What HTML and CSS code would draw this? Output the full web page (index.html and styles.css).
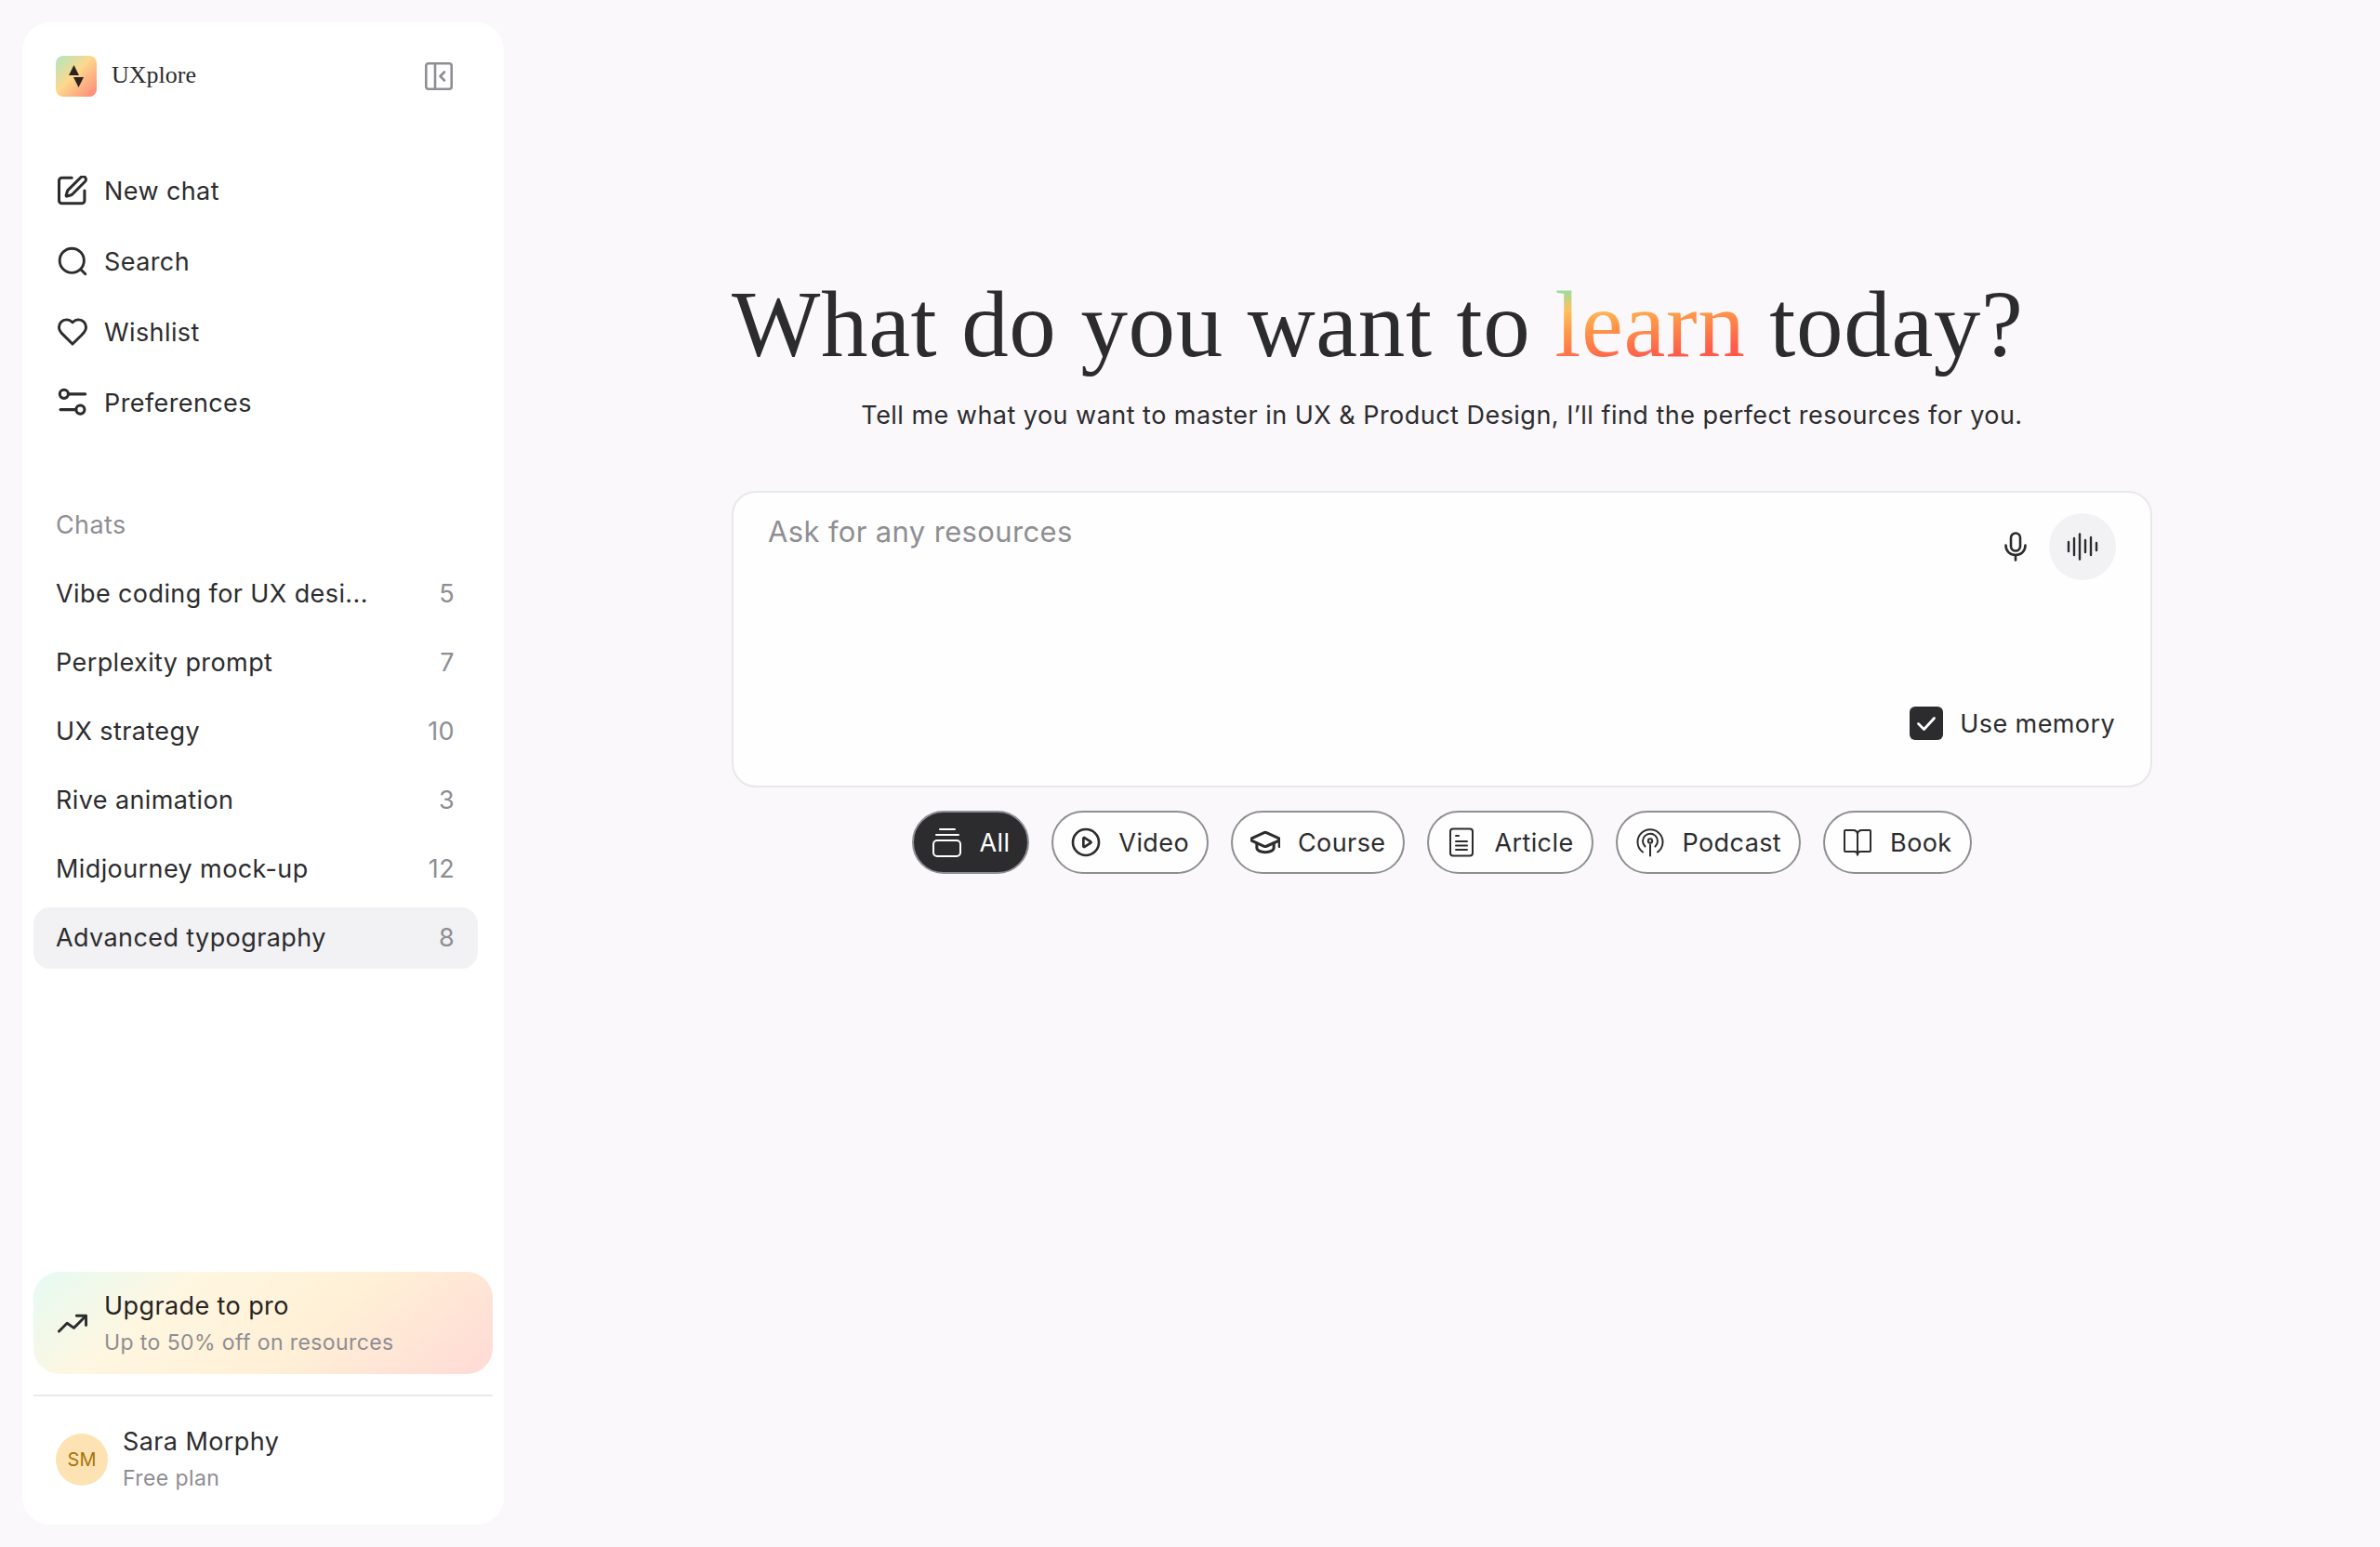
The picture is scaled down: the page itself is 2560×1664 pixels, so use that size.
FILE: index.html
```html
<!DOCTYPE html>
<html lang="en">
<head>
    <meta charset="UTF-8">
    <meta name="viewport" content="width=device-width, initial-scale=1.0">
    <title>UXplore</title>
    <link rel="stylesheet" href="styles.css">
</head>
<body>
    <!-- Sidebar -->
    <aside class="sidebar">
        <div class="brand">
            <svg class="logo" viewBox="0 0 44 44">
                <defs>
                    <linearGradient id="logo-grad" x1="0" y1="0" x2="1" y2="1">
                        <stop offset="0" stop-color="#aee6c4"/>
                        <stop offset="0.45" stop-color="#fcd98c"/>
                        <stop offset="1" stop-color="#ff8478"/>
                    </linearGradient>
                </defs>
                <rect width="44" height="44" rx="8" fill="url(#logo-grad)"/>
                <polygon points="14,21 25,21 19.500,10" fill="#2a2320"/>
                <polygon points="19,23 30,23 24.500,34" fill="#2a2320"/>
            </svg>
            <span class="brand-name">UXplore</span>
            <svg class="collapse" viewBox="0 0 30 30" fill="none" stroke="#8e8e93" stroke-width="2.600" stroke-linecap="round" stroke-linejoin="round">
                <rect x="1.300" y="1.300" width="27.400" height="27.400" rx="2.500"/>
                <path d="M11 1.300v27.400"/>
                <path d="M21 10.500l-4.500 4.500 4.500 4.500"/>
            </svg>
        </div>

        <nav class="menu">
            <a href="#" class="menu-item">
                <svg class="icon" viewBox="2 1.500 21 21"><path d="M12 3H5a2 2 0 0 0-2 2v14a2 2 0 0 0 2 2h14a2 2 0 0 0 2-2v-7"/><path d="M18.375 2.625a1 1 0 0 1 3 3l-9.013 9.014a2 2 0 0 1-.853.505l-2.873.84a.5.5 0 0 1-.62-.62l.84-2.873a2 2 0 0 1 .506-.852z"/></svg>
                New chat
            </a>
            <a href="#" class="menu-item">
                <svg class="icon" viewBox="1 1 22 22"><circle cx="11.500" cy="11.500" r="9"/><path d="M18.200 18.200l3.300 3.300"/></svg>
                Search
            </a>
            <a href="#" class="menu-item">
                <svg class="icon" viewBox="1 1 22 22"><path d="M19 14c1.490-1.460 3-3.210 3-5.500A5.500 5.500 0 0 0 16.500 3c-1.760 0-3 .5-4.500 2-1.500-1.500-2.740-2-4.500-2A5.500 5.500 0 0 0 2 8.500c0 2.300 1.500 4.050 3 5.500l7 7Z"/></svg>
                Wishlist
            </a>
            <a href="#" class="menu-item">
                <svg class="icon" viewBox="1.500 2 21 21"><circle cx="6" cy="6.500" r="3"/><path d="M9 6.500h12"/><circle cx="17.500" cy="17.500" r="3"/><path d="M3.500 17.500h11"/></svg>
                Preferences
            </a>
        </nav>

        <div class="chats-title">Chats</div>
        <ul class="chats">
            <li class="chat"><span>Vibe coding for UX desi...</span><span class="count">5</span></li>
            <li class="chat"><span>Perplexity prompt</span><span class="count">7</span></li>
            <li class="chat"><span>UX strategy</span><span class="count">10</span></li>
            <li class="chat"><span>Rive animation</span><span class="count">3</span></li>
            <li class="chat"><span>Midjourney mock-up</span><span class="count">12</span></li>
            <li class="chat active"><span>Advanced typography</span><span class="count">8</span></li>
        </ul>

        <div class="promo">
            <svg class="icon" viewBox="1 1 22 22"><path d="M2 17.500l6-6 5 3.500 8.500-8.500"/><path d="M15 6h7v7"/></svg>
            <div>
                <div class="promo-title">Upgrade to pro</div>
                <div class="promo-sub">Up to 50% off on resources</div>
            </div>
        </div>

        <div class="account">
            <div class="avatar">SM</div>
            <div>
                <div class="account-name">Sara Morphy</div>
                <div class="account-plan">Free plan</div>
            </div>
        </div>
    </aside>

    <!-- Main -->
    <main class="main">
        <div class="content">
            <h1>What do you want to <span class="learn">learn</span> today?</h1>
            <p class="lead">Tell me what you want to master in UX &amp; Product Design, I’ll find the perfect resources for you.</p>

            <div class="ask-box">
                <div class="ask-top">
                    <span class="placeholder">Ask for any resources</span>
                    <svg class="mic" viewBox="0 0 24 32" fill="none" stroke="#2c2c2e" stroke-width="2.600" stroke-linecap="round">
                        <rect x="7" y="1.500" width="10" height="19" rx="5"/>
                        <path d="M1.500 14.500c0 6.500 4.500 10.500 10.500 10.500s10.500-4 10.500-10.500"/>
                        <path d="M12 25v5.500"/>
                    </svg>
                    <div class="wave-btn">
                        <svg class="wave" viewBox="0 0 34 30" fill="none" stroke="#2c2c2e" stroke-width="2.400" stroke-linecap="round">
                            <path d="M2 10v10"/><path d="M8 6v18"/><path d="M14 1.500v27"/><path d="M20 8v13"/><path d="M26 5v19"/><path d="M32 11v8"/>
                        </svg>
                    </div>
                </div>
                <div class="memory">
                    <span class="checkbox">
                        <svg viewBox="0 0 36 36" fill="none" stroke="#fff" stroke-width="2.800" stroke-linecap="round" stroke-linejoin="round"><path d="M9.500 18.500l6 6 11-12"/></svg>
                    </span>
                    Use memory
                </div>
            </div>

            <div class="filters">
                <button class="chip selected">
                    <svg class="icon" viewBox="0 0 32 32"><path d="M9 2h16"/><path d="M5 8h24"/><rect x="2" y="14" width="29" height="17" rx="4"/></svg>
                    All
                </button>
                <button class="chip">
                    <svg class="icon" viewBox="0 0 24 24"><circle cx="12" cy="12" r="10.500"/><path d="M10 8.800a.6.6 0 0 1 .9-.5l5 3.200a.6.6 0 0 1 0 1l-5 3.200a.6.6 0 0 1-.9-.5z"/></svg>
                    Video
                </button>
                <button class="chip">
                    <svg class="icon" viewBox="1.500 2.500 21 21"><path d="M21.400 11.900a1 1 0 0 0 0-1.800l-8.600-3.900a2 2 0 0 0-1.600 0l-8.600 3.900a1 1 0 0 0 0 1.800l8.600 3.900a2 2 0 0 0 1.600 0z"/><path d="M22 11v5"/><path d="M6 13.500V17c0 1.700 2.700 3 6 3s6-1.300 6-3v-3.500"/></svg>
                    Course
                </button>
                <button class="chip">
                    <svg class="icon" viewBox="0 0 32 32"><rect x="4" y="1.500" width="24" height="29" rx="3"/><path d="M10 9h3"/><path d="M10 15h12"/><path d="M10 19.500h12"/><path d="M10 24h12"/></svg>
                    Article
                </button>
                <button class="chip">
                    <svg class="icon" viewBox="0 0 32 32"><path d="M8 26.500a13.500 13.500 0 1 1 16 0"/><path d="M10.500 20.500a8 8 0 1 1 11 0"/><circle cx="16" cy="14.500" r="2.200"/><path d="M16 18.500v12"/></svg>
                    Podcast
                </button>
                <button class="chip">
                    <svg class="icon" viewBox="0 0 32 32"><path d="M16 7.500v22"/><path d="M16 7.500C16 4.500 14 3 11 3H3a1 1 0 0 0-1 1v21a1 1 0 0 0 1 1h10c2 0 3 1.500 3 3.500 0-2 1-3.500 3-3.500h10a1 1 0 0 0 1-1V4a1 1 0 0 0-1-1h-8c-3 0-5 1.500-5 4.500z"/></svg>
                    Book
                </button>
            </div>
        </div>
    </main>
</body>
</html>
```

FILE: styles.css
```css
* {
    box-sizing: border-box;
}
body {
    font-family: Inter, "Liberation Sans", sans-serif;
    font-size: 27px;
    letter-spacing: 0.4px;
    color: #2c2c2e;
    background-color: #faf8fb;
    margin: 0;
    padding: 24px 0 24px 24px;
    height: 1664px;
    display: flex;
}
a {
    color: inherit;
    text-decoration: none;
}
.icon {
    width: 32px;
    height: 32px;
    flex: none;
    fill: none;
    stroke: currentColor;
    stroke-width: 2;
    stroke-linecap: round;
    stroke-linejoin: round;
}

/* Sidebar */
.sidebar {
    width: 518px;
    flex: none;
    background-color: #fff;
    border-radius: 30px;
    padding: 36px 12px 0;
    display: flex;
    flex-direction: column;
}
.brand {
    display: flex;
    align-items: center;
    height: 44px;
    padding: 0 43px 0 24px;
}
.logo {
    width: 44px;
    height: 44px;
}
.brand-name {
    font-family: "Liberation Serif", serif;
    font-size: 26px;
    letter-spacing: 0;
    margin: 0 0 2px 16px;
    flex: 1;
}
.collapse {
    width: 30px;
    height: 30px;
}
.menu {
    margin-top: 63px;
}
.menu-item {
    display: flex;
    align-items: center;
    gap: 18px;
    height: 76px;
    padding-left: 26px;
}
.chats-title {
    color: #8e8e93;
    margin: 77px 0 0 24px;
    line-height: 34px;
}
.chats {
    list-style: none;
    margin: 24px 16px 0 0;
    padding: 0;
}
.chat {
    display: flex;
    justify-content: space-between;
    align-items: center;
    height: 66px;
    margin-bottom: 8px;
    padding: 0 25px 1px 24px;
    border-radius: 18px;
}
.chat.active {
    background-color: #f2f1f4;
}
.count {
    color: #8e8e93;
}
.promo {
    margin-top: auto;
    height: 110px;
    display: flex;
    align-items: center;
    gap: 18px;
    padding: 2px 0 0 26px;
    border-radius: 28px;
    background: linear-gradient(140deg, #e6fbf3 0%, #fff6e0 30%, #fff0d6 60%, #ffdad6 100%);
}
.promo-title {
    line-height: 36px;
    color: #26241f;
}
.promo-sub {
    font-size: 23px;
    line-height: 34px;
    margin-top: 4px;
    color: #8e8e93;
}
.account {
    margin-top: 22px;
    border-top: 2px solid #e9e9ec;
    height: 140px;
    display: flex;
    align-items: center;
    gap: 16px;
    padding: 0 0 2px 24px;
}
.avatar {
    width: 56px;
    height: 56px;
    border-radius: 50%;
    background-color: #fde3b4;
    color: #a87408;
    font-size: 20px;
    letter-spacing: 0;
    display: flex;
    align-items: center;
    justify-content: center;
}
.account-name {
    line-height: 36px;
}
.account-plan {
    font-size: 23px;
    line-height: 34px;
    margin-top: 4px;
    color: #8e8e93;
}

/* Main */
.main {
    flex: 1;
    display: flex;
    justify-content: center;
}
.content {
    width: 1528px;
    padding-top: 265px;
}
h1 {
    font-family: "Liberation Serif", serif;
    font-size: 101px;
    font-weight: normal;
    letter-spacing: 0.65px;
    line-height: 120px;
    margin: 0;
}
.learn {
    background: linear-gradient(172deg, #9fdc9a 16%, #fdc25c 30%, #ff9a48 46%, #ff5b4a 76%);
    -webkit-background-clip: text;
    background-clip: text;
    color: transparent;
}
.lead {
    text-align: center;
    letter-spacing: 0.47px;
    margin: 19px 0 0;
    line-height: 38px;
}
.ask-box {
    margin-top: 62px;
    height: 319px;
    background-color: #fefefe;
    border: 2px solid #e8e7ea;
    border-radius: 26px;
    padding: 22px 37px 0;
}
.ask-top {
    display: flex;
    align-items: flex-start;
}
.placeholder {
    flex: 1;
    font-size: 31px;
    letter-spacing: 0.35px;
    line-height: 40px;
    color: #8e8e93;
}
.mic {
    width: 24px;
    height: 32px;
    margin: 20px 24px 0 0;
}
.wave-btn {
    width: 72px;
    height: 72px;
    border-radius: 50%;
    background-color: #f2f1f4;
    display: flex;
    align-items: center;
    justify-content: center;
}
.wave {
    width: 34px;
    height: 30px;
}
.memory {
    display: flex;
    justify-content: flex-end;
    align-items: center;
    gap: 18px;
    margin-top: 136px;
    padding-right: 1px;
    height: 36px;
}
.checkbox {
    width: 36px;
    height: 36px;
    border-radius: 6px;
    background-color: #2c2c2e;
}
.checkbox svg {
    display: block;
}
.filters {
    display: flex;
    justify-content: center;
    gap: 24px;
    margin-top: 25px;
}
.chip {
    display: flex;
    align-items: center;
    gap: 19px;
    height: 68px;
    padding: 0 19px;
    border: 2px solid #8e8e93;
    border-radius: 34px;
    background-color: #fefefe;
    color: #2c2c2e;
    font: inherit;
    letter-spacing: inherit;
}
.chip.selected {
    background-color: #2c2c2e;
    color: #fff;
}
```
